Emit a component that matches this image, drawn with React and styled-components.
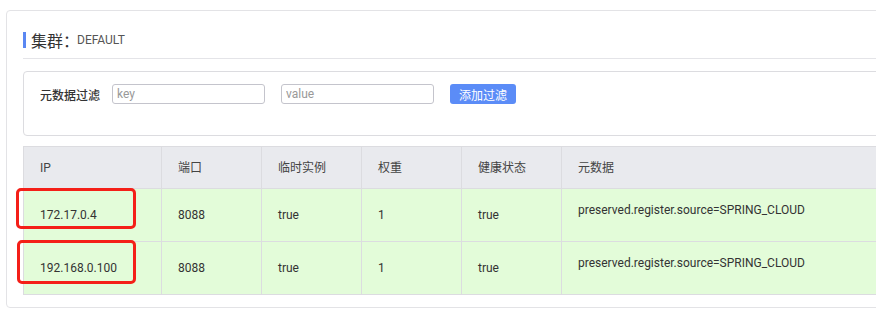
import React from "react";
import styled, { createGlobalStyle } from "styled-components";

const GlobalStyle = createGlobalStyle`
  html, body {
    margin: 0;
    padding: 0;
    overflow: hidden;
    background: #fff;
    font-family: Roboto, "Noto Sans CJK SC", sans-serif;
    color: #333;
  }
`;

const Page = styled.div`
  padding: 10px 0 0 6px;
`;

const Card = styled.div`
  width: 900px;
  border: 1px solid #e3e3e6;
  border-radius: 4px;
  padding: 0 16px 12px;
`;

const TitleRow = styled.div`
  display: flex;
  align-items: center;
  height: 37px;
  padding-top: 10px;
  border-bottom: 1px solid #e4e4e8;
`;

const TitleBar = styled.span`
  width: 3px;
  height: 16px;
  background: #5a87f2;
  margin-right: 5px;
`;

const TitleText = styled.span`
  font-family: "Noto Sans CJK SC", sans-serif;
  font-size: 16px;
  color: #333;
`;

const TitleValue = styled.span`
  font-size: 12px;
  color: #555;
  margin-left: -2px;
`;

const FilterBox = styled.div`
  margin-top: 12px;
  border: 1px solid #dcdce0;
  border-radius: 4px;
  padding: 12px 16px 31px;
`;

const FilterRow = styled.div`
  display: flex;
  align-items: center;
`;

const Label = styled.span`
  font-family: "Noto Sans CJK SC", sans-serif;
  font-size: 12px;
  font-weight: 500;
  color: #333;
  margin-right: 12px;
`;

const Input = styled.input`
  box-sizing: border-box;
  width: 153px;
  height: 20px;
  border: 1px solid #c4c4cc;
  border-radius: 3px;
  padding: 0 4px;
  margin-right: 16px;
  font-family: inherit;
  font-size: 12px;
  color: #333;
  outline: none;
  &::placeholder {
    color: #999;
  }
`;

const Button = styled.button`
  box-sizing: border-box;
  width: 66px;
  height: 20px;
  border: none;
  border-radius: 3px;
  background: #5b8cf7;
  color: #fff;
  font-family: "Noto Sans CJK SC", sans-serif;
  font-size: 12px;
  padding: 0;
  cursor: pointer;
`;

const TableWrap = styled.div`
  position: relative;
  margin-top: 10px;
`;

const Table = styled.table`
  width: 100%;
  table-layout: fixed;
  border-collapse: collapse;
  font-size: 12px;
  line-height: 16px;
`;

const Row = styled.tr`
  height: ${(p) => (p.$head ? "42px" : "53px")};
`;

const Th = styled.th`
  background: #e9eaee;
  border: 1px solid #dcdce0;
  text-align: left;
  font-weight: normal;
  padding: 0 0 0 16px;
  color: #444;
`;

const Td = styled.td`
  background: #e3fcd9;
  border: 1px solid #dcdce0;
  text-align: left;
  padding: 0 0 ${(p) => (p.$meta ? "10px" : "0")} 16px;
  color: #333;
  vertical-align: middle;
`;

const Highlight = styled.div`
  position: absolute;
  left: ${(p) => p.$left}px;
  top: ${(p) => p.$top}px;
  width: ${(p) => p.$w}px;
  height: ${(p) => p.$h}px;
  box-sizing: border-box;
  border: 3px solid #f41f18;
  border-radius: 5px;
  pointer-events: none;
`;

const columns = [
  { title: "IP", width: 138 },
  { title: "端口", width: 100 },
  { title: "临时实例", width: 100 },
  { title: "权重", width: 100 },
  { title: "健康状态", width: 100 },
  { title: "元数据" },
];

const rows = [
  { ip: "172.17.0.4", port: "8088", ephemeral: "true", weight: "1", healthy: "true", meta: "preserved.register.source=SPRING_CLOUD" },
  { ip: "192.168.0.100", port: "8088", ephemeral: "true", weight: "1", healthy: "true", meta: "preserved.register.source=SPRING_CLOUD" },
];

export default function App() {
  return (
    <>
      <GlobalStyle />
      <Page>
        <Card>
          <TitleRow>
            <TitleBar />
            <TitleText>集群：</TitleText>
            <TitleValue>DEFAULT</TitleValue>
          </TitleRow>
          <FilterBox>
            <FilterRow>
              <Label>元数据过滤</Label>
              <Input placeholder="key" />
              <Input placeholder="value" />
              <Button>添加过滤</Button>
            </FilterRow>
          </FilterBox>
          <TableWrap>
            <Table>
              <colgroup>
                {columns.map((c, i) => (
                  <col key={i} style={c.width ? { width: c.width } : undefined} />
                ))}
              </colgroup>
              <thead>
                <Row $head>
                  {columns.map((c) => (
                    <Th key={c.title}>{c.title}</Th>
                  ))}
                </Row>
              </thead>
              <tbody>
                {rows.map((r) => (
                  <Row key={r.ip}>
                    <Td>{r.ip}</Td>
                    <Td>{r.port}</Td>
                    <Td>{r.ephemeral}</Td>
                    <Td>{r.weight}</Td>
                    <Td>{r.healthy}</Td>
                    <Td $meta>{r.meta}</Td>
                  </Row>
                ))}
              </tbody>
            </Table>
            <Highlight $left={-7} $top={42} $w={120} $h={41} />
            <Highlight $left={-6} $top={94} $w={119} $h={44} />
          </TableWrap>
        </Card>
      </Page>
    </>
  );
}
